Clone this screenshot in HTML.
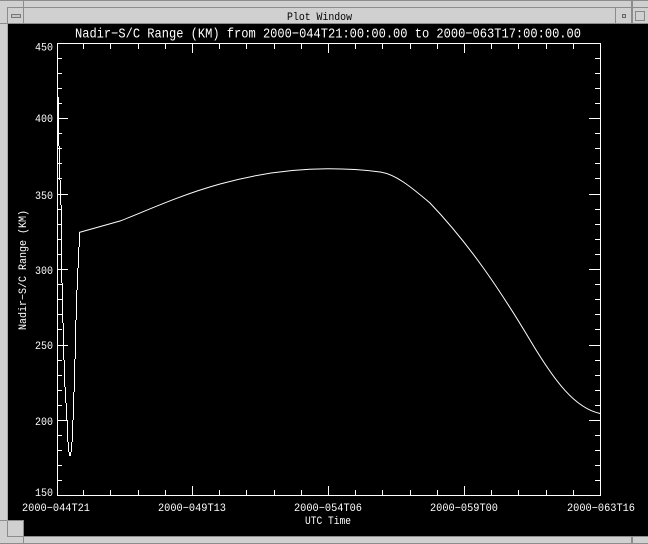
<!DOCTYPE html>
<html><head><meta charset="utf-8"><style>
html,body{margin:0;padding:0;background:#000;width:648px;height:544px;overflow:hidden}
svg{display:block}
text{font-family:"Liberation Mono",monospace;fill:#fff;font-weight:normal}
</style></head><body>
<svg width="648" height="544" viewBox="0 0 648 544" xmlns="http://www.w3.org/2000/svg">
<rect width="648" height="544" fill="#000"/>
<g shape-rendering="crispEdges">
<rect x="0" y="0" width="648" height="23" fill="#d0d0d0"/>
<rect x="0" y="0" width="7" height="544" fill="#d0d0d0"/>
<rect x="0" y="536" width="648" height="8" fill="#d0d0d0"/>
<g fill="#8c8c8c">
<rect x="0" y="0" width="648" height="1"/>
<rect x="7" y="7" width="641" height="1"/>
<rect x="0" y="23" width="648" height="1"/>
<rect x="7" y="7" width="1" height="17"/>
<rect x="23" y="0" width="1" height="24"/>
<rect x="615" y="8" width="1" height="16"/>
<rect x="631" y="0" width="2" height="24"/>
<rect x="0" y="520" width="24" height="1"/>
<rect x="7" y="521" width="1" height="16"/>
<rect x="7" y="536" width="17" height="1"/>
<rect x="23" y="520" width="1" height="24"/>
<rect x="0" y="543" width="648" height="1"/>
<rect x="631" y="536" width="2" height="8"/>
<rect x="24" y="536" width="624" height="1"/>
</g>
<rect x="7" y="24" width="1" height="497" fill="#a8a8a8"/>
<rect x="8" y="521" width="15" height="15" fill="#d0d0d0"/>
<rect x="11.5" y="14.5" width="9" height="3" fill="#c4c4c4" stroke="#777"/>
<rect x="622.5" y="14.5" width="3" height="3" fill="#c4c4c4" stroke="#666"/>
<rect x="635.5" y="11.5" width="9" height="9" fill="none" stroke="#888"/>
</g>
<text x="319.500" y="20" font-size="11" text-anchor="middle" style="fill:#000" textLength="65" lengthAdjust="spacingAndGlyphs">Plot Window</text>

<g fill="none" stroke="#fff" stroke-width="1" shape-rendering="crispEdges">
<path d="M57.5 43.5H600.5V495.5H57.5Z"/>
<path d="M83.5 44v5M110.5 44v5M138.5 44v5M165.5 44v5M192.5 44v9M219.5 44v5M246.5 44v5M274.5 44v5M301.5 44v5M328.5 44v9M355.5 44v5M382.5 44v5M410.5 44v5M437.5 44v5M464.5 44v9M491.5 44v5M518.5 44v5M546.5 44v5M573.5 44v5"/>
<path d="M83.5 495v-5M110.5 495v-5M138.5 495v-5M165.5 495v-5M192.5 495v-9M219.5 495v-5M246.5 495v-5M274.5 495v-5M301.5 495v-5M328.5 495v-9M355.5 495v-5M382.5 495v-5M410.5 495v-5M437.5 495v-5M464.5 495v-9M491.5 495v-5M518.5 495v-5M546.5 495v-5M573.5 495v-5"/>
<path d="M57 58.5h5M57 73.5h5M57 88.5h5M57 103.5h5M57 118.5h11M57 133.5h5M57 148.5h5M57 163.5h5M57 178.5h5M57 194.5h11M57 209.5h5M57 224.5h5M57 239.5h5M57 254.5h5M57 269.5h11M57 284.5h5M57 299.5h5M57 314.5h5M57 329.5h5M57 345.5h11M57 360.5h5M57 375.5h5M57 390.5h5M57 405.5h5M57 420.5h11M57 435.5h5M57 450.5h5M57 465.5h5M57 480.5h5"/>
<path d="M600 58.5h-5M600 73.5h-5M600 88.5h-5M600 103.5h-5M600 118.5h-11M600 133.5h-5M600 148.5h-5M600 163.5h-5M600 178.5h-5M600 194.5h-11M600 209.5h-5M600 224.5h-5M600 239.5h-5M600 254.5h-5M600 269.5h-11M600 284.5h-5M600 299.5h-5M600 314.5h-5M600 329.5h-5M600 345.5h-11M600 360.5h-5M600 375.5h-5M600 390.5h-5M600 405.5h-5M600 420.5h-11M600 435.5h-5M600 450.5h-5M600 465.5h-5M600 480.5h-5"/>
<path d="M58.500 97V146M59.500 146V180M60.500 180V205M61.500 205V283M62.500 283V323M63.500 323V360M64.500 360V387M65.500 387V403M66.500 403V420M67.500 420V442M68.500 442V452M69.500 452V456"/>
<path d="M70.500 456V452M71.500 452V442M72.500 442V420M73.500 420V392M74.500 392V359M75.500 359V320M76.500 320V290M77.500 290V268M78.500 268V247M79.500 247V232"/>
</g>
<path fill="none" stroke="#fff" stroke-width="1" d="M79 232.500L120 221C160 206 230 169 328 168.800C350 168.800 365 170 380 172C395 174 410 186 430 203C470 245 500 290 530 340C555 382 575 408 600 413.500"/>

<text x="328" y="37.500" text-anchor="middle" font-size="14" textLength="506" lengthAdjust="spacingAndGlyphs">Nadir−S/C Range (KM) from 2000−044T21:00:00.00 to 2000−063T17:00:00.00</text>
<g text-anchor="end" font-size="11">
<text x="53" y="50.500" textLength="18" lengthAdjust="spacingAndGlyphs">450</text>
<text x="53" y="122" textLength="18" lengthAdjust="spacingAndGlyphs">400</text>
<text x="53" y="199" textLength="18" lengthAdjust="spacingAndGlyphs">350</text>
<text x="53" y="274" textLength="18" lengthAdjust="spacingAndGlyphs">300</text>
<text x="53" y="349" textLength="18" lengthAdjust="spacingAndGlyphs">250</text>
<text x="53" y="425" textLength="18" lengthAdjust="spacingAndGlyphs">200</text>
<text x="53" y="496" textLength="18" lengthAdjust="spacingAndGlyphs">150</text>
</g>
<g text-anchor="middle" font-size="11">
<text x="56" y="511" textLength="68" lengthAdjust="spacingAndGlyphs">2000−044T21</text>
<text x="192" y="511" textLength="68" lengthAdjust="spacingAndGlyphs">2000−049T13</text>
<text x="328" y="511" textLength="68" lengthAdjust="spacingAndGlyphs">2000−054T06</text>
<text x="464" y="511" textLength="68" lengthAdjust="spacingAndGlyphs">2000−059T00</text>
<text x="601" y="511" textLength="68" lengthAdjust="spacingAndGlyphs">2000−063T16</text>
<text x="328" y="524" textLength="46" lengthAdjust="spacingAndGlyphs">UTC Time</text>
<text transform="translate(26 270) rotate(-90)" textLength="120" lengthAdjust="spacingAndGlyphs">Nadir−S/C Range (KM)</text>
</g>
</svg>
</body></html>
